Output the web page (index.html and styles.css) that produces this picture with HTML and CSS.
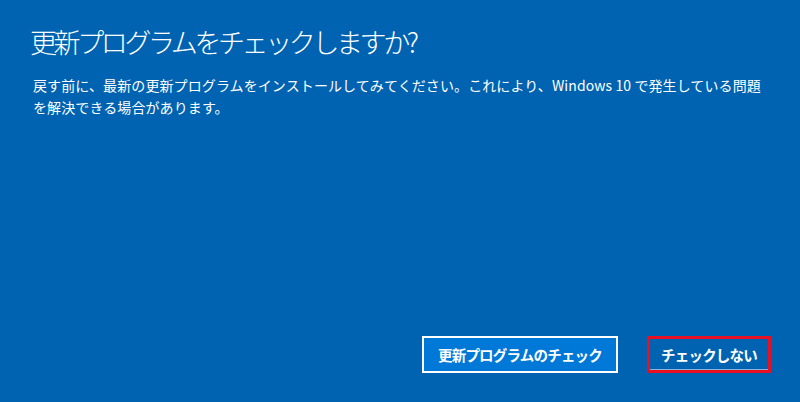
FILE: index.html
```html
<!DOCTYPE html>
<html lang="ja">
<head>
<meta charset="utf-8">
<link rel="stylesheet" href="styles.css">
</head>
<body>
<div class="page">
  <h1 class="title">更新プログラムをチェックしますか?</h1>
  <p class="desc">戻す前に、最新の更新プログラムをインストールしてみてください。これにより、Windows 10 で発生している問題を解決できる場合があります。</p>
  <div class="spacer"></div>
  <div class="actions">
    <button class="btn btn-primary">更新プログラムのチェック</button>
    <button class="btn btn-focus">チェックしない</button>
  </div>
</div>
</body>
</html>
```
FILE: styles.css
```css
html, body {
  margin: 0;
  padding: 0;
  background: #0063b1;
}
.page {
  box-sizing: border-box;
  width: 800px;
  height: 402px;
  display: flex;
  flex-direction: column;
  padding: 24px 29px 29px 30px;
  font-family: "Noto Sans CJK JP", "Noto Sans", sans-serif;
  color: #ffffff;
}
.title {
  margin: 0;
  font-size: 27px;
  font-weight: 300;
  line-height: 36px;
  letter-spacing: -3.4px;
}
.desc {
  margin: 14px 0 0 3px;
  width: 736px;
  font-size: 14px;
  line-height: 22px;
  font-weight: 400;
  letter-spacing: 0.1px;
}
.spacer {
  flex: 1;
}
.actions {
  display: flex;
  justify-content: flex-end;
  gap: 29px;
}
.btn {
  box-sizing: border-box;
  height: 37px;
  font-family: "Noto Sans CJK JP", "Noto Sans", sans-serif;
  font-size: 14.5px;
  font-weight: 700;
  color: #ffffff;
  letter-spacing: -0.8px;
  cursor: pointer;
  padding: 0;
}
.btn-primary {
  width: 196px;
  background: #0078d7;
  border: 2px solid #ffffff;
}
.btn-focus {
  width: 124px;
  background: #0063b1;
  border: 3px solid #e81123;
  box-shadow: inset 0 -1px 0 #8fb4d8;
}
```
